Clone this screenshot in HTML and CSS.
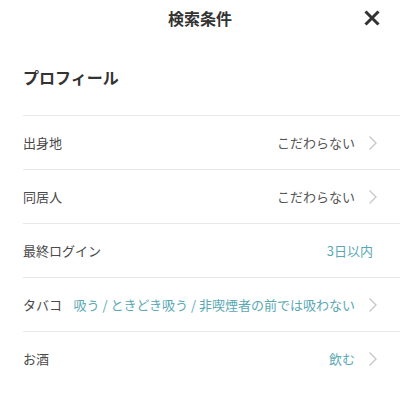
FILE: index.html
```
<!DOCTYPE html>
<html lang="ja">
<head>
<meta charset="utf-8">
<link rel="stylesheet" href="styles.css">
</head>
<body>
<div class="header">
  <div></div>
  <div class="title">検索条件</div>
  <div class="close">
    <svg width="18" height="18" viewBox="0 0 18 18"><path d="M2.5 2.5 L15.5 15.5 M15.5 2.5 L2.5 15.5" stroke="#333" stroke-width="3" fill="none"/></svg>
  </div>
</div>
<div class="section">プロフィール</div>
<ul class="list">
  <li class="row"><span class="label">出身地</span><span class="value">こだわらない</span><span class="chev"><svg width="10" height="16" viewBox="0 0 10 16"><path d="M1.5 1.5 L8 8 L1.5 14.5" stroke="#c8c8c8" stroke-width="1.4" fill="none"/></svg></span></li>
  <li class="row"><span class="label">同居人</span><span class="value">こだわらない</span><span class="chev"><svg width="10" height="16" viewBox="0 0 10 16"><path d="M1.5 1.5 L8 8 L1.5 14.5" stroke="#c8c8c8" stroke-width="1.4" fill="none"/></svg></span></li>
  <li class="row"><span class="label">最終ログイン</span><span class="value teal nochev">3日以内</span></li>
  <li class="row"><span class="label">タバコ</span><span class="value teal">吸う / ときどき吸う / 非喫煙者の前では吸わない</span><span class="chev"><svg width="10" height="16" viewBox="0 0 10 16"><path d="M1.5 1.5 L8 8 L1.5 14.5" stroke="#c8c8c8" stroke-width="1.4" fill="none"/></svg></span></li>
  <li class="row"><span class="label">お酒</span><span class="value teal">飲む</span><span class="chev"><svg width="10" height="16" viewBox="0 0 10 16"><path d="M1.5 1.5 L8 8 L1.5 14.5" stroke="#c8c8c8" stroke-width="1.4" fill="none"/></svg></span></li>
</ul>
</body>
</html>
```
FILE: styles.css
```
html, body {
  margin: 0;
  padding: 0;
  background: #fff;
}
body {
  font-family: "Noto Sans CJK JP", "Noto Sans", sans-serif;
  color: #4a4a4a;
}
.header {
  display: grid;
  grid-template-columns: 1fr auto 1fr;
  align-items: center;
  height: 36px;
}
.title {
  font-size: 16px;
  font-weight: bold;
  color: #333;
  line-height: 36px;
}
.close {
  justify-self: end;
  margin-right: 19px;
  display: flex;
  align-items: center;
}
.section {
  margin: 29px 0 0 23px;
  padding-bottom: 26px;
  font-size: 16px;
  font-weight: bold;
  line-height: 24px;
  color: #333;
}
.list {
  list-style: none;
  margin: 0;
  padding: 0 0 0 23px;
}
.row {
  display: flex;
  align-items: center;
  height: 53px;
  border-top: 1px solid #e8e8e8;
  padding-right: 22px;
  font-size: 13px;
}
.label {
  color: #4a4a4a;
  white-space: nowrap;
}
.value {
  margin-left: auto;
  color: #555;
  white-space: nowrap;
}
.teal {
  color: #5aa8b4;
}
.nochev {
  margin-right: 5px;
}
.chev {
  display: flex;
  margin-left: 13px;
}
```
